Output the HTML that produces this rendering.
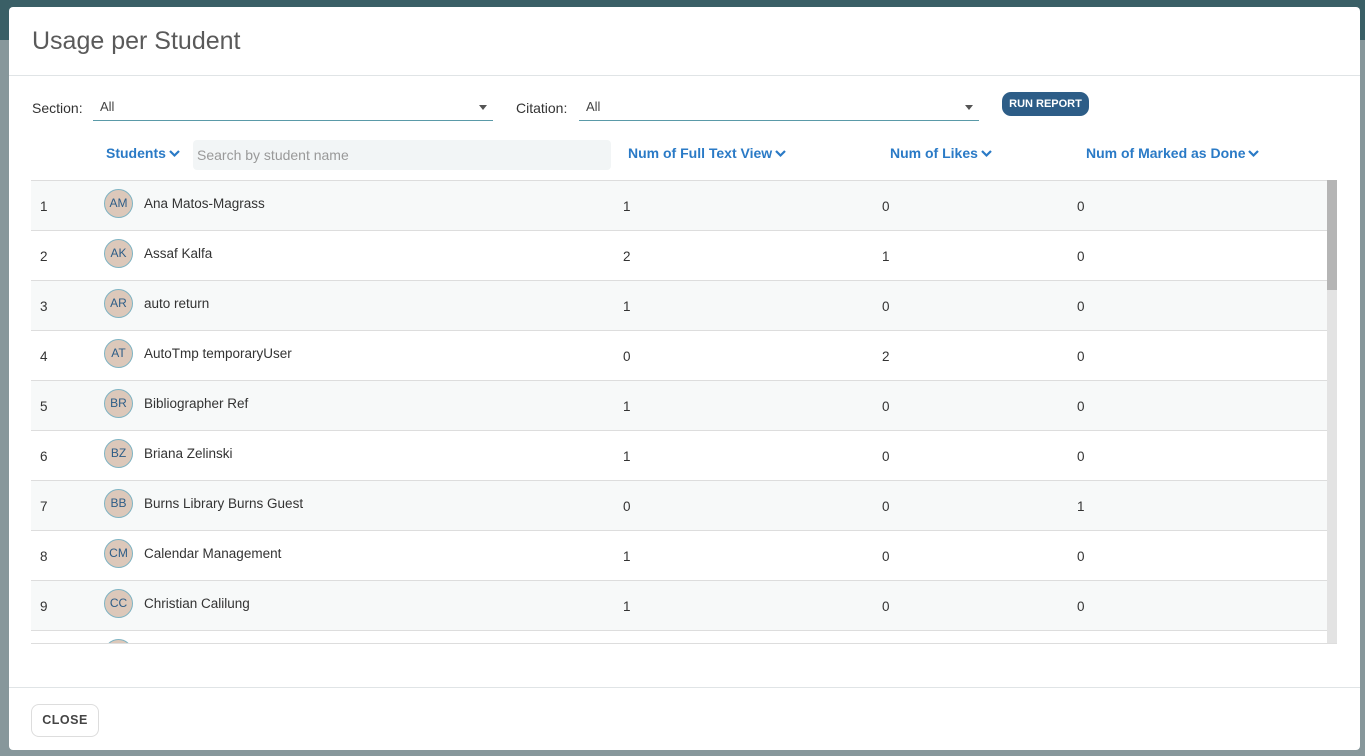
<!DOCTYPE html>
<html><head><meta charset="utf-8"><style>
*{box-sizing:border-box;margin:0;padding:0}
body{width:1365px;height:756px;overflow:hidden;background:#87979b;font-family:"Liberation Sans",sans-serif;position:relative}
.topbar{position:absolute;left:0;top:0;width:1365px;height:40px;background:#3a5f66}
.modal{position:absolute;left:9px;top:7px;width:1351px;height:743px;background:#fff;border-radius:4px}
.title{position:absolute;left:23px;top:20px;font-size:25px;color:#5a5a5a;font-weight:300}
.hr{position:absolute;left:0;width:1351px;height:1px;background:#e0e4e6}
.lbl{position:absolute;font-size:14px;color:#333}
.sel{position:absolute;height:22px;border-bottom:1px solid #5a9aa8;font-size:13px;color:#444;padding-left:7px;line-height:16px}
.sel:after{content:"";position:absolute;right:6px;top:6px;border:4px solid transparent;border-top:5px solid #555}
.btn{position:absolute;left:993px;top:85px;width:87px;height:24px;background:#2d5d87;border-radius:9px;color:#fff;font-size:11px;font-weight:bold;text-align:center;line-height:24px}
.th{position:absolute;top:138px;font-size:14px;font-weight:bold;color:#2a7ac6}
.th svg{vertical-align:middle;margin-left:3px}
.search{position:absolute;left:184px;top:133px;width:418px;height:30px;background:#f2f5f6;border-radius:4px;font-size:14px;color:#999;padding:7px 4px}
.row{position:absolute;left:22px;width:1296px;height:50px;border-top:1px solid #ddd;font-size:13.5px;color:#333}
.row.o{background:#f7f9f9}
.row span{position:absolute;top:18px}
.av{position:absolute;left:73px;top:8px;width:29px;height:29px;border-radius:50%;background:#dcc8ba;border:1px solid #7fb3c2;color:#2d5d87;font-size:12px;text-align:center;line-height:27px}
.sb{position:absolute;left:1318px;top:173px;width:10px;height:463px;background:#e3e3e3}
.sb div{height:110px;background:#b5b5b5}
.close{position:absolute;left:22px;top:697px;width:68px;height:33px;border:1px solid #ddd;border-radius:8px;font-size:12.5px;font-weight:bold;color:#444;text-align:center;line-height:31px;letter-spacing:.5px}
</style></head><body>
<div class="topbar"></div>
<div class="modal">
<div class="title">Usage per Student</div>
<div class="hr" style="top:68px"></div>
<div class="lbl" style="left:23px;top:93px">Section:</div>
<div class="sel" style="left:84px;top:92px;width:400px">All</div>
<div class="lbl" style="left:507px;top:93px">Citation:</div>
<div class="sel" style="left:570px;top:92px;width:400px">All</div>
<div class="btn">RUN REPORT</div>
<div class="th" style="left:97px">Students<svg width="11" height="8"><path d="M1 1l4.5 4.5L10 1" stroke="#2a7ac6" stroke-width="2.2" fill="none"/></svg></div>
<div class="search">Search by student name</div>
<div class="th" style="left:619px">Num of Full Text View<svg width="11" height="8"><path d="M1 1l4.5 4.5L10 1" stroke="#2a7ac6" stroke-width="2.2" fill="none"/></svg></div>
<div class="th" style="left:881px">Num of Likes<svg width="11" height="8"><path d="M1 1l4.5 4.5L10 1" stroke="#2a7ac6" stroke-width="2.2" fill="none"/></svg></div>
<div class="th" style="left:1077px">Num of Marked as Done<svg width="11" height="8"><path d="M1 1l4.5 4.5L10 1" stroke="#2a7ac6" stroke-width="2.2" fill="none"/></svg></div>

<div class="row o" style="top:173px"><span style="left:9px">1</span><div class="av">AM</div><span style="left:113px;top:15px">Ana Matos-Magrass</span><span style="left:592px">1</span><span style="left:851px">0</span><span style="left:1046px">0</span></div>
<div class="row" style="top:223px"><span style="left:9px">2</span><div class="av">AK</div><span style="left:113px;top:15px">Assaf Kalfa</span><span style="left:592px">2</span><span style="left:851px">1</span><span style="left:1046px">0</span></div>
<div class="row o" style="top:273px"><span style="left:9px">3</span><div class="av">AR</div><span style="left:113px;top:15px">auto return</span><span style="left:592px">1</span><span style="left:851px">0</span><span style="left:1046px">0</span></div>
<div class="row" style="top:323px"><span style="left:9px">4</span><div class="av">AT</div><span style="left:113px;top:15px">AutoTmp temporaryUser</span><span style="left:592px">0</span><span style="left:851px">2</span><span style="left:1046px">0</span></div>
<div class="row o" style="top:373px"><span style="left:9px">5</span><div class="av">BR</div><span style="left:113px;top:15px">Bibliographer Ref</span><span style="left:592px">1</span><span style="left:851px">0</span><span style="left:1046px">0</span></div>
<div class="row" style="top:423px"><span style="left:9px">6</span><div class="av">BZ</div><span style="left:113px;top:15px">Briana Zelinski</span><span style="left:592px">1</span><span style="left:851px">0</span><span style="left:1046px">0</span></div>
<div class="row o" style="top:473px"><span style="left:9px">7</span><div class="av">BB</div><span style="left:113px;top:15px">Burns Library Burns Guest</span><span style="left:592px">0</span><span style="left:851px">0</span><span style="left:1046px">1</span></div>
<div class="row" style="top:523px"><span style="left:9px">8</span><div class="av">CM</div><span style="left:113px;top:15px">Calendar Management</span><span style="left:592px">1</span><span style="left:851px">0</span><span style="left:1046px">0</span></div>
<div class="row o" style="top:573px"><span style="left:9px">9</span><div class="av">CC</div><span style="left:113px;top:15px">Christian Calilung</span><span style="left:592px">1</span><span style="left:851px">0</span><span style="left:1046px">0</span></div>
<div class="row" style="top:623px;height:13px;overflow:hidden"><div class="av"></div></div>
<div style="position:absolute;left:22px;top:636px;width:1306px;height:1px;background:#ddd"></div>
<div class="sb"><div></div></div>
<div class="hr" style="top:680px"></div>
<div class="close">CLOSE</div>
</div>
</body></html>
